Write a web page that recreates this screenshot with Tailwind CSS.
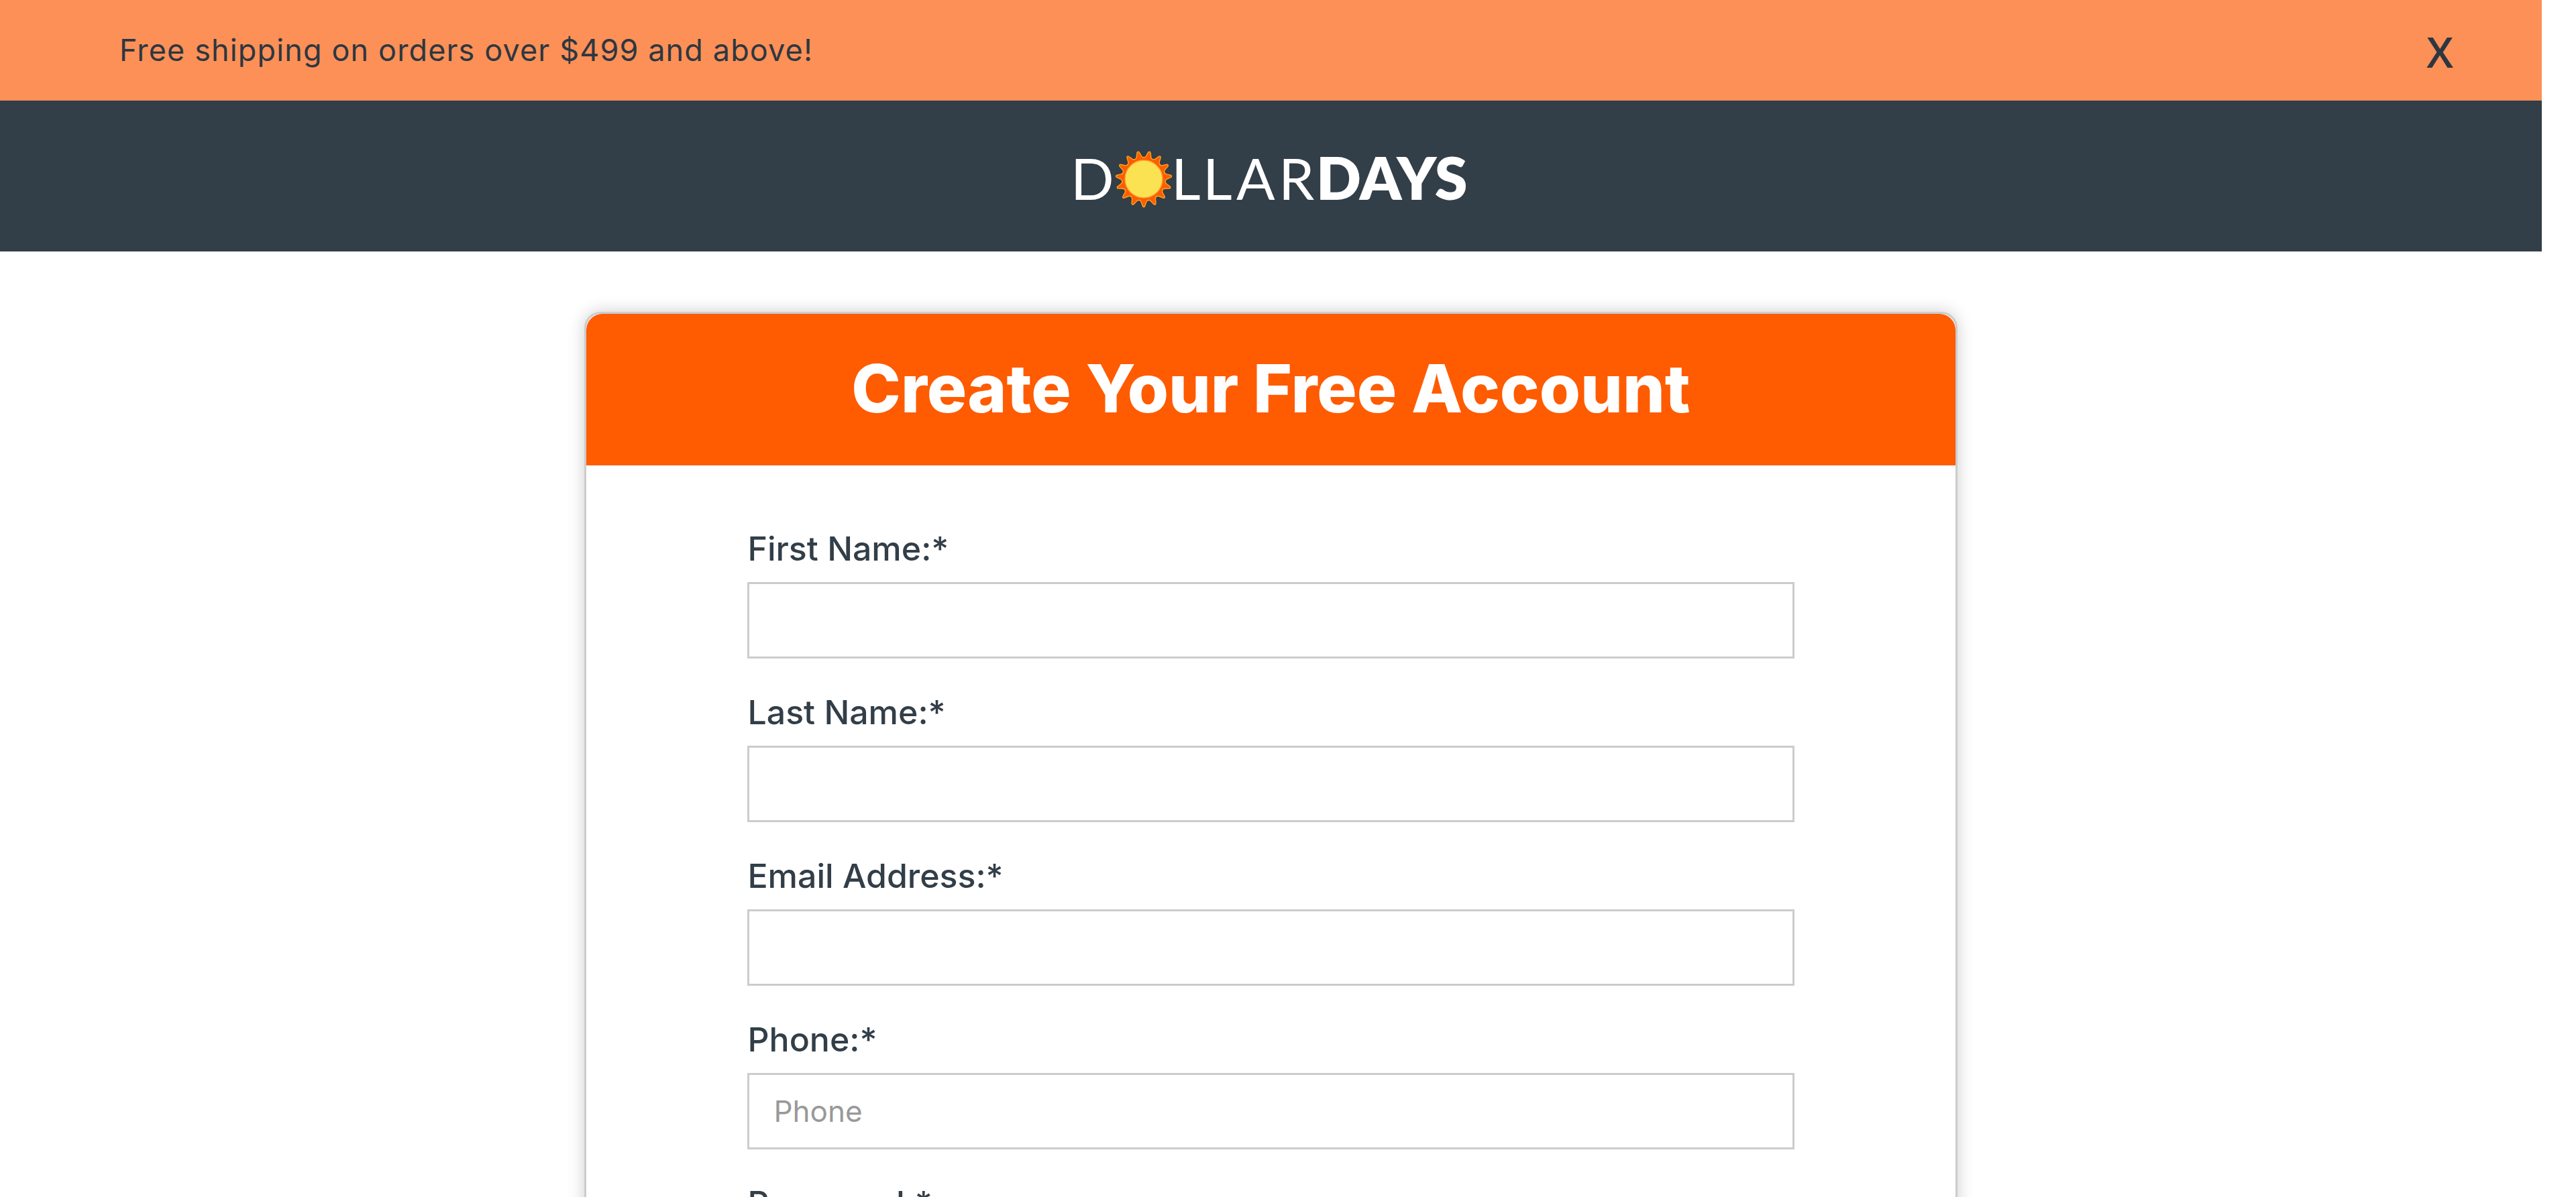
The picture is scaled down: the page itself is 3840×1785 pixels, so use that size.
<!DOCTYPE html>
<html lang="en">
<head>
<meta charset="utf-8">
<meta name="viewport" content="width=device-width, initial-scale=1">
<title>Create Your Free Account | DollarDays</title>
<script src="https://cdn.jsdelivr.net/npm/@tailwindcss/browser@4"></script>
</head>
<body class="h-screen overflow-hidden bg-white pr-[51px] font-['Inter',sans-serif] text-[#323e48]">
  <div class="flex h-[150px] items-center justify-between bg-[#fc9057] pr-[132px] pl-[178px]">
    <p class="text-[45px] leading-[60px] tracking-wide text-[#2d3741]">Free shipping on orders over $499 and above!</p>
    <button type="button" aria-label="Close" class="pt-1 font-['Open_Sans',sans-serif] text-[64px] leading-[90px] font-semibold text-[#2d3741]">X</button>
  </div>
  <header class="flex h-[225px] items-center justify-center bg-[#323e48]">
    <a href="#" aria-label="DollarDays home">
      <svg class="h-[120px] w-[590px] overflow-visible" viewBox="0 -10 590 120" fill="#fff" font-family="Lato, sans-serif" font-size="85">
        <defs>
          <path id="ray" d="M0 0L-7 31.500Q-5 31-3.500 35L-1.600 40.500Q0 43 1.600 40.500L3.500 35Q5 31 7 31.500Z"/>
        </defs>
        <text x="-4" y="85" font-weight="400">D</text>
        <g transform="translate(105 54)">
          <g fill="#ff5b00" stroke="#f9a01b" stroke-width="1.500">
            <use href="#ray"/><use href="#ray" transform="rotate(24)"/><use href="#ray" transform="rotate(48)"/>
            <use href="#ray" transform="rotate(72)"/><use href="#ray" transform="rotate(96)"/><use href="#ray" transform="rotate(120)"/>
            <use href="#ray" transform="rotate(144)"/><use href="#ray" transform="rotate(168)"/><use href="#ray" transform="rotate(192)"/>
            <use href="#ray" transform="rotate(216)"/><use href="#ray" transform="rotate(240)"/><use href="#ray" transform="rotate(264)"/>
            <use href="#ray" transform="rotate(288)"/><use href="#ray" transform="rotate(312)"/><use href="#ray" transform="rotate(336)"/>
          </g>
          <circle r="31.500" fill="#ff5b00"/>
          <circle r="28" fill="#fbe253" stroke="#fca12b" stroke-width="1.500"/>
        </g>
        <text x="146 193 243 306" y="85" font-weight="400">LLAR</text>
        <text x="362" y="85" font-weight="800" font-size="88">DAYS</text>
      </svg>
    </a>
  </header>
  <main class="mx-auto mt-[90px] w-[54%] rounded-t-[24px] border-[3px] border-[#ccc] bg-white shadow-[0_0_24px_rgba(0,0,0,0.2)]">
    <h1 class="flex h-[226px] items-center justify-center rounded-t-[24px] bg-[#ff5b00] pb-1 text-[99px] leading-[120px] font-extrabold text-white">Create Your Free Account</h1>
    <form class="flex flex-col gap-[40px] px-[240px] pt-[84px] pb-[90px]">
      <div class="flex flex-col gap-[14px] pt-1">
        <label for="first" class="text-[50px] leading-[72px] font-medium">First Name:*</label>
        <input id="first" type="text" class="h-[114px] w-full border-[3px] border-[#ccc] px-[36px] text-[44px]">
      </div>
      <div class="flex flex-col gap-[14px] pt-1">
        <label for="last" class="text-[50px] leading-[72px] font-medium">Last Name:*</label>
        <input id="last" type="text" class="h-[114px] w-full border-[3px] border-[#ccc] px-[36px] text-[44px]">
      </div>
      <div class="flex flex-col gap-[14px] pt-1">
        <label for="email" class="text-[50px] leading-[72px] font-medium">Email Address:*</label>
        <input id="email" type="email" class="h-[114px] w-full border-[3px] border-[#ccc] px-[36px] text-[44px]">
      </div>
      <div class="flex flex-col gap-[14px] pt-1">
        <label for="phone" class="text-[50px] leading-[72px] font-medium">Phone:*</label>
        <input id="phone" type="tel" placeholder="Phone" class="h-[114px] w-full border-[3px] border-[#ccc] px-[36px] text-[44px] placeholder:text-[#999]">
      </div>
      <div class="flex flex-col gap-[14px] pt-1">
        <label for="password" class="text-[50px] leading-[72px] font-medium">Password:*</label>
        <input id="password" type="password" class="h-[114px] w-full border-[3px] border-[#ccc] px-[36px] text-[44px]">
      </div>
    </form>
  </main>
</body>
</html>
